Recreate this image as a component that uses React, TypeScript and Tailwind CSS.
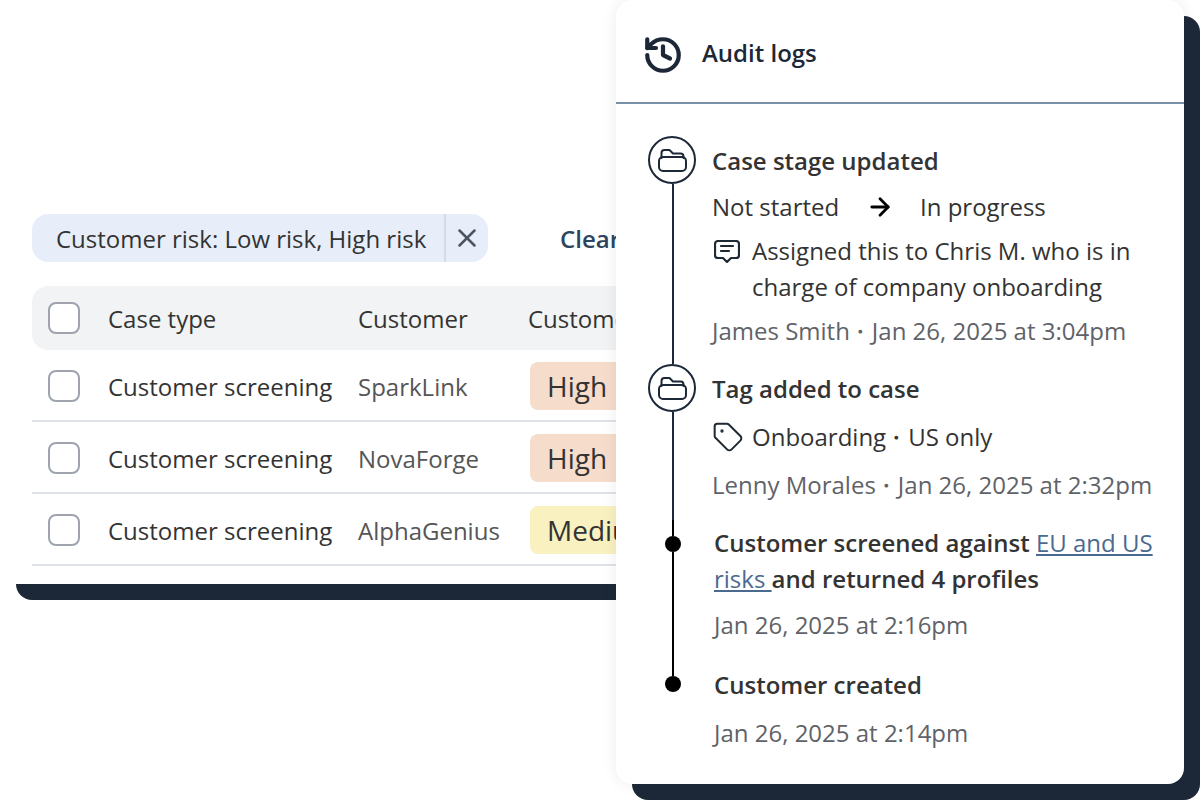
import { History, Tag, X, ArrowRight } from "lucide-react";

const FolderIcon = () => (
  <svg width="29" height="24" viewBox="0 0 29 24" fill="none" stroke="#1c2837" strokeWidth="2" strokeLinejoin="round" strokeLinecap="round">
    <path d="M3.5 10V5a3 3 0 0 1 3-3h5l3.5 3.5h7.5a3 3 0 0 1 3 3V10" />
    <rect x="1" y="9" width="27" height="14" rx="4" />
  </svg>
);

const CommentIcon = () => (
  <svg width="26" height="23" viewBox="0 0 26 23" fill="none" stroke="#1f2933" strokeWidth="2.2" strokeLinejoin="round" strokeLinecap="round" className="shrink-0">
    <path d="M4 1h18a3 3 0 0 1 3 3v11a3 3 0 0 1-3 3h-5l-4 4-4-4H4a3 3 0 0 1-3-3V4a3 3 0 0 1 3-3z" />
    <path d="M7 6h12M7 11h8" />
  </svg>
);

const Checkbox = () => <div className="w-8 h-8 rounded-lg border-2 border-[#9ea3ad] bg-white shrink-0" />;

const Sep = () => <span className="-ml-0.5">・</span>;

const rows = [
  { name: "SparkLink", risk: "High", bg: "bg-[#f6dccb]" },
  { name: "NovaForge", risk: "High", bg: "bg-[#f6dccb]" },
  { name: "AlphaGenius", risk: "Medium", bg: "bg-[#f9f1c0]" },
];

const Circle = () => (
  <div className="w-12 shrink-0 flex flex-col items-center">
    <div className="w-12 h-12 shrink-0 rounded-full border-2 border-[#1c2837] flex items-center justify-center bg-white">
      <FolderIcon />
    </div>
    <div className="w-0.5 flex-1 bg-[#1c2837] ml-px" />
  </div>
);

const Dot = ({ top, last }: { top: string; last?: boolean }) => (
  <div className="w-12 shrink-0 flex flex-col items-center ml-px">
    <div className={`w-0.5 ${top} bg-black`} />
    <div className="w-4 h-4 shrink-0 rounded-full bg-black" />
    {!last && <div className="w-0.5 flex-1 bg-black" />}
  </div>
);

export default function App() {
  return (
    <div className="relative w-[1200px] h-[800px] overflow-hidden bg-white font-['Open_Sans',sans-serif] text-[24px] leading-9 text-[#333]">
      <div className="w-[760px] h-[584px] pt-[214px] rounded-bl-2xl shadow-[16px_16px_0_#1c2837]">
        <div className="pl-8 flex items-center">
          <div className="h-12 w-[456px] rounded-2xl bg-[#e8eef9] flex items-center text-[#333]">
            <span className="pl-6 flex-1 whitespace-nowrap mt-0.5">Customer risk: Low risk, High risk</span>
            <span className="w-0.5 h-12 bg-[#d5dbe6]" />
            <span className="w-[42px] flex justify-center"><X size={30} strokeWidth={2} color="#4b5563" /></span>
          </div>
          <span className="ml-[72px] font-semibold text-[#2d4560] whitespace-nowrap mt-0.5">Clear all</span>
        </div>
        <div className="ml-8 mt-6 w-[728px]">
          <div className="h-16 rounded-2xl bg-[#f1f3f5] flex items-center pl-4">
            <Checkbox />
            <span className="ml-7 w-[250px] mt-0.5">Case type</span>
            <span className="w-[170px] mt-0.5">Customer</span>
            <span className="whitespace-nowrap mt-0.5">Customer risk</span>
          </div>
          {rows.map((r) => (
            <div key={r.name} className="h-[72px] border-b-2 border-[#dfe1e8] flex items-center pl-4 pt-0.5">
              <Checkbox />
              <span className="ml-7 w-[250px] whitespace-nowrap mt-0.5">Customer screening</span>
              <span className="w-[172px] text-[#555] mt-0.5">{r.name}</span>
              <span className={`h-12 px-[17px] rounded-lg flex items-center text-[28px] text-[#333] ${r.bg}`}>{r.risk}</span>
            </div>
          ))}
        </div>
      </div>

      <div className="absolute left-[616px] top-0 w-[568px] h-[784px] rounded-2xl bg-white shadow-[16px_16px_0_#1c2837,0_0_16px_rgba(0,0,0,0.08)]">
        <div className="h-[104px] border-b-2 border-[#7a8fa8] flex items-center pl-[26px] pt-2 gap-[18px]">
          <History size={42} strokeWidth={2.4} color="#1c2837" />
          <span className="font-semibold text-[#1c2837] -mt-1">Audit logs</span>
        </div>
        <div className="pl-8 pt-8">
          <div className="flex h-[228px]">
            <Circle />
            <div className="ml-4 pt-[7px]">
              <div className="font-semibold">Case stage updated</div>
              <div className="mt-2.5 flex items-center">
                <span className="w-[154px]">Not started</span>
                <ArrowRight size={28} strokeWidth={2.4} color="#000" />
                <span className="ml-[26px]">In progress</span>
              </div>
              <div className="mt-2 flex">
                <span className="w-10 pl-0.5 pt-[7px]"><CommentIcon /></span>
                <span className="w-[400px]">Assigned this to Chris M. who is in charge of company onboarding</span>
              </div>
              <div className="mt-2 text-[#5f6368] whitespace-nowrap">James Smith<Sep />Jan 26, 2025 at 3:04pm</div>
            </div>
          </div>
          <div className="flex h-[156px]">
            <Circle />
            <div className="ml-4 pt-[7px]">
              <div className="font-semibold">Tag added to case</div>
              <div className="mt-3 flex items-center">
                <span className="w-10"><Tag size={32} strokeWidth={1.5} color="#1f2933" /></span>
                <span>Onboarding<Sep />US only</span>
              </div>
              <div className="mt-3 text-[#5f6368] whitespace-nowrap">Lenny Morales<Sep />Jan 26, 2025 at 2:32pm</div>
            </div>
          </div>
          <div className="flex h-[148px]">
            <Dot top="h-4" />
            <div className="ml-[17px] pt-[5px]">
              <div className="font-semibold w-[450px]">
                Customer screened against <a className="font-normal underline text-[#4a6a8f]">EU and US risks </a>and returned 4 profiles
              </div>
              <div className="mt-2.5 text-[#5f6368]">Jan 26, 2025 at 2:16pm</div>
            </div>
          </div>
          <div className="flex">
            <Dot top="h-2" last />
            <div className="ml-[17px] -mt-px">
              <div className="font-semibold">Customer created</div>
              <div className="mt-3 text-[#5f6368]">Jan 26, 2025 at 2:14pm</div>
            </div>
          </div>
        </div>
      </div>
    </div>
  );
}
